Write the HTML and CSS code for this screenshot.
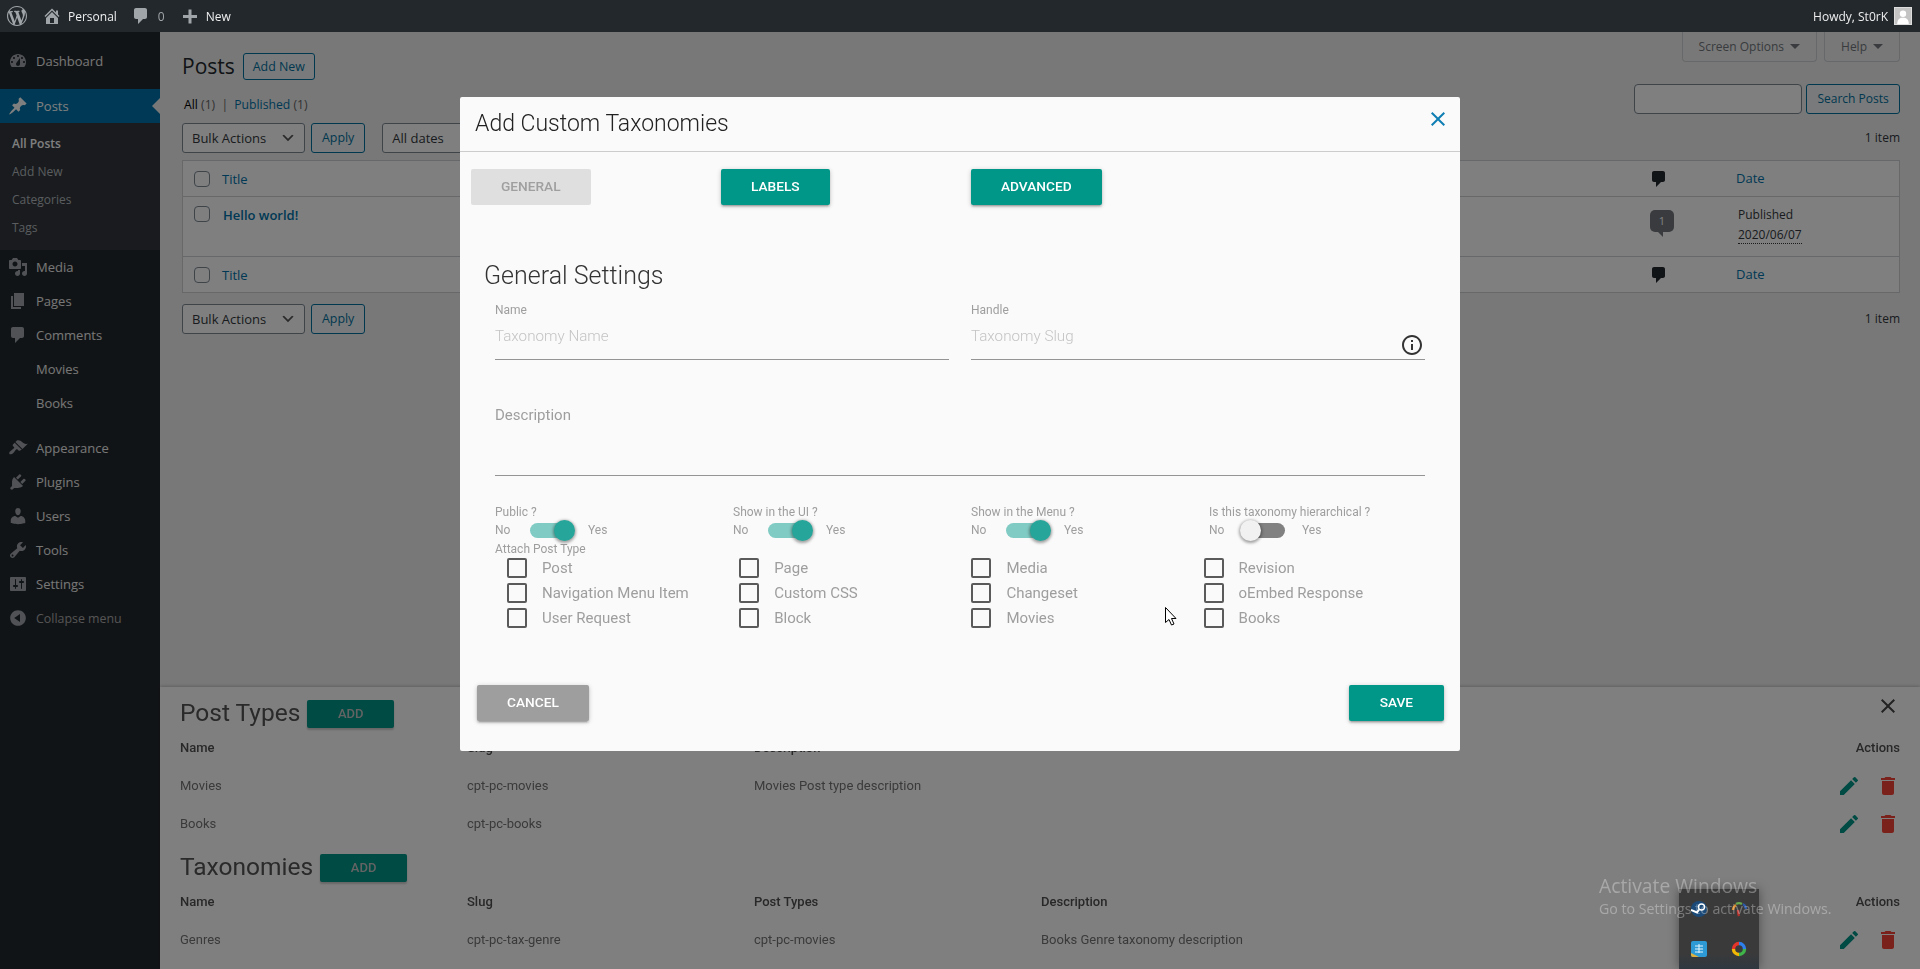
FILE: index.html
```html
<!DOCTYPE html>
<html lang="en">
<head>
    <meta charset="UTF-8">
    <title>Posts</title>
    <link rel="stylesheet" href="styles.css">
</head>
<body>
    <!-- Icon sprite -->
    <svg class="sprite" xmlns="http://www.w3.org/2000/svg">
        <symbol id="i-wp" viewBox="0 0 20 20"><path d="M20 10c0-5.51-4.49-10-10-10C4.48 0 0 4.49 0 10c0 5.52 4.48 10 10 10 5.51 0 10-4.48 10-10zM7.78 15.37L4.37 6.22c.55-.02 1.17-.08 1.17-.08.5-.06.44-1.13-.06-1.11 0 0-1.45.11-2.37.11-.18 0-.37 0-.58-.01C4.12 2.69 6.87 1.11 10 1.11c2.33 0 4.45.87 6.05 2.34-.68-.11-1.65.39-1.65 1.58 0 .74.45 1.36.9 2.1.35.61.55 1.36.55 2.46 0 1.49-1.4 5-1.4 5l-3.03-8.37c.54-.02.82-.17.82-.17.5-.05.44-1.25-.06-1.22 0 0-1.44.12-2.38.12-.87 0-2.33-.12-2.33-.12-.5-.03-.56 1.2-.06 1.22l.92.08 1.26 3.41zM17.41 10c.24-.64.74-1.87.43-4.25.7 1.29 1.05 2.71 1.05 4.25 0 3.29-1.73 6.24-4.4 7.78.97-2.59 1.94-5.2 2.92-7.78zM6.1 18.09C3.12 16.65 1.11 13.53 1.11 10c0-1.3.23-2.48.72-3.59C3.25 10.3 4.67 14.2 6.1 18.09zm4.03-6.63l2.58 6.98c-.86.29-1.76.45-2.71.45-.79 0-1.57-.11-2.29-.33.81-2.38 1.62-4.74 2.42-7.1z"/></symbol>
        <symbol id="i-home" viewBox="0 0 20 20"><path d="M16 8.5l1.53 1.53-1.06 1.06L10 4.62l-6.47 6.47-1.06-1.06L10 2.5l4 4v-2h2v4zm-6-2.46l6 5.99V18H4v-5.97zM12 17v-5H8v5h4z"/></symbol>
        <symbol id="i-comment" viewBox="0 0 20 20"><path d="M5 2h9c1.1 0 2 .9 2 2v7c0 1.1-.9 2-2 2h-2l-5 5v-5H5c-1.1 0-2-.9-2-2V4c0-1.1.9-2 2-2z"/></symbol>
        <symbol id="i-plus" viewBox="0 0 20 20"><path d="M17 9v3h-5.5v5.5h-3V12H3V9h5.5V3.5h3V9H17z"/></symbol>
        <symbol id="i-dashboard" viewBox="0 0 20 20"><path fill-rule="evenodd" d="M3.76 16h12.48c1.1-1.37 1.76-3.11 1.76-5 0-4.42-3.58-8-8-8s-8 3.58-8 8c0 1.89.66 3.63 1.76 5zM10 4c.55 0 1 .45 1 1s-.45 1-1 1-1-.45-1-1 .45-1 1-1zM6 6c.55 0 1 .45 1 1s-.45 1-1 1-1-.45-1-1 .45-1 1-1zm8 0c.55 0 1 .45 1 1s-.45 1-1 1-1-.45-1-1 .45-1 1-1zm-5.37 5.55L12 7v6c0 1.1-.9 2-2 2s-2-.9-2-2c0-.57.24-1.08.63-1.45zM4 10c.55 0 1 .45 1 1s-.45 1-1 1-1-.45-1-1 .45-1 1-1zm12 0c.55 0 1 .45 1 1s-.45 1-1 1-1-.45-1-1 .45-1 1-1z"/></symbol>
        <symbol id="i-pin" viewBox="0 0 20 20"><path d="M10.44 3.02l1.82-1.82 6.36 6.35-1.83 1.82c-1.05-.68-2.48-.57-3.41.36l-.75.75c-.92.93-1.04 2.35-.35 3.41l-1.83 1.82-2.41-2.41-2.8 2.79c-.42.42-3.38 2.71-3.8 2.29s1.86-3.39 2.28-3.81l2.79-2.79L4.1 9.36l1.83-1.82c1.05.69 2.48.57 3.4-.36l.75-.75c.93-.92 1.05-2.35.36-3.41z"/></symbol>
        <symbol id="i-media" viewBox="0 0 20 20"><path fill-rule="evenodd" d="M13 11V4c0-.55-.45-1-1-1h-1.67L9 1H5L3.67 3H2c-.55 0-1 .45-1 1v7c0 .55.45 1 1 1h10c.55 0 1-.45 1-1zM7 4.5c1.38 0 2.5 1.12 2.5 2.5S8.38 9.5 7 9.5 4.5 8.38 4.5 7 5.62 4.5 7 4.5zM14 6h5v10.5c0 1.38-1.12 2.5-2.5 2.5S14 17.88 14 16.5s1.12-2.5 2.5-2.5c.17 0 .34.02.5.05V9h-3V6zm-4 8.05V13h2v3.5c0 1.38-1.12 2.5-2.5 2.5S7 17.88 7 16.5 8.12 14 9.5 14c.17 0 .34.02.5.05z"/></symbol>
        <symbol id="i-pages" viewBox="0 0 20 20"><path d="M6 15V2h10v13H6zm-1 1h8v2H3V5h2v11z"/></symbol>
        <symbol id="i-appearance" viewBox="0 0 20 20"><path d="M14.48 11.06L7.41 3.99l1.5-1.5c.5-.56 2.3-.47 3.51.32 1.21.8 1.43 1.28 2.91 2.1 1.18.64 2.45 1.26 4.45.85zm-.71.71L6.7 4.7 4.93 6.47c-.39.39-.39 1.02 0 1.41l1.06 1.06c.39.39.39 1.03 0 1.42-.6.6-1.43 1.11-2.21 1.69-.35.26-.7.53-1.01.84C1.43 13.23.75 15.2 1.5 15.95s2.72.07 4.06-1.27c.31-.31.58-.66.84-1.01.58-.78 1.09-1.61 1.69-2.21.39-.39 1.02-.39 1.41 0l1.06 1.06c.39.39 1.02.39 1.41 0z"/></symbol>
        <symbol id="i-plugins" viewBox="0 0 20 20"><path d="M13.11 4.36L9.87 7.6 8 5.73l3.24-3.24c.35-.34 1.05-.2 1.56.32.52.51.66 1.21.31 1.55zm-8 1.77l.91-1.12 9.01 9.01-1.19.84c-.71.71-2.63 1.16-3.82 1.16H6.14L4.9 17.26c-.59.59-1.54.59-2.12 0-.59-.58-.59-1.53 0-2.12l1.24-1.24v-3.88c0-1.13.4-3.19 1.09-3.89zm7.26 3.97l3.24-3.24c.34-.35 1.04-.21 1.55.31.52.51.66 1.21.31 1.55l-3.24 3.25z"/></symbol>
        <symbol id="i-users" viewBox="0 0 20 20"><path d="M10 9.25c-2.27 0-2.73-3.44-2.73-3.44C7 4.02 7.82 2 9.97 2c2.16 0 2.98 2.02 2.71 3.81 0 0-.41 3.44-2.68 3.44zm0 2.57L12.72 10c2.39 0 4.52 2.33 4.52 4.53v2.49s-3.65 1.13-7.24 1.13c-3.65 0-7.24-1.13-7.24-1.13v-2.49c0-2.25 1.94-4.48 4.47-4.48z"/></symbol>
        <symbol id="i-tools" viewBox="0 0 20 20"><path fill-rule="evenodd" d="M16.68 9.77c-1.34 1.34-3.3 1.67-4.95.99l-5.41 6.52c-.99.99-2.59.99-3.58 0s-.99-2.59 0-3.57l6.52-5.42c-.68-1.65-.35-3.61.99-4.95 1.28-1.28 3.12-1.62 4.72-1.06l-2.89 2.89 2.82 2.82 2.86-2.87c.53 1.58.18 3.39-1.08 4.65zM3.81 16.21c.4.39 1.04.39 1.43 0 .4-.4.4-1.04 0-1.43-.39-.4-1.03-.4-1.43 0-.39.39-.39 1.03 0 1.43z"/></symbol>
        <symbol id="i-settings" viewBox="0 0 20 20"><path fill-rule="evenodd" d="M18 16V4c0-.55-.45-1-1-1H3c-.55 0-1 .45-1 1v12c0 .55.45 1 1 1h14c.55 0 1-.45 1-1zM8 11h1c.55 0 1 .45 1 1s-.45 1-1 1H8v1.5c0 .28-.22.5-.5.5s-.5-.22-.5-.5V13H6c-.55 0-1-.45-1-1s.45-1 1-1h1V5.5c0-.28.22-.5.5-.5s.5.22.5.5V11zm5-2h-1c-.55 0-1-.45-1-1s.45-1 1-1h1V5.5c0-.28.22-.5.5-.5s.5.22.5.5V7h1c.55 0 1 .45 1 1s-.45 1-1 1h-1v5.5c0 .28-.22.5-.5.5s-.5-.22-.5-.5V9z"/></symbol>
        <symbol id="i-collapse" viewBox="0 0 20 20"><path fill-rule="evenodd" d="M10 2.16c4.33 0 7.84 3.51 7.84 7.84s-3.51 7.84-7.84 7.84S2.16 14.33 2.16 10 5.71 2.16 10 2.16zm2 11.72V6.12L6.18 9.97z"/></symbol>
        <symbol id="i-close" viewBox="0 0 24 24"><path d="M19 6.41L17.59 5 12 10.59 6.41 5 5 6.41 10.59 12 5 17.59 6.41 19 12 13.41 17.59 19 19 17.59 13.41 12z"/></symbol>
        <symbol id="i-info" viewBox="0 0 24 24"><path d="M11 7h2v2h-2zm0 4h2v6h-2zm1-9C6.48 2 2 6.48 2 12s4.48 10 10 10 10-4.48 10-10S17.52 2 12 2zm0 18c-4.41 0-8-3.59-8-8s3.59-8 8-8 8 3.59 8 8-3.59 8-8 8z"/></symbol>
        <symbol id="i-edit" viewBox="0 0 24 24"><path d="M3 17.25V21h3.75L17.81 9.94l-3.75-3.75L3 17.25zM20.71 7.04a1 1 0 0 0 0-1.41l-2.34-2.34a1 1 0 0 0-1.41 0l-1.83 1.83 3.75 3.75 1.83-1.83z"/></symbol>
        <symbol id="i-trash" viewBox="0 0 24 24"><path d="M6 19c0 1.1.9 2 2 2h8c1.1 0 2-.9 2-2V7H6v12zM19 4h-3.5l-1-1h-5l-1 1H5v2h14V4z"/></symbol>
        <symbol id="i-chevron" viewBox="0 0 20 20"><path d="M5 6l5 5 5-5 2 1-7 7-7-7z"/></symbol>
    </svg>

    <!-- Admin bar -->
    <header class="adminbar">
        <svg class="bar-icon bar-logo"><use href="#i-wp"/></svg>
        <svg class="bar-icon bar-home"><use href="#i-home"/></svg>
        <span class="bar-site">Personal</span>
        <svg class="bar-icon bar-comment"><use href="#i-comment"/></svg>
        <span class="bar-count">0</span>
        <svg class="bar-icon bar-plus"><use href="#i-plus"/></svg>
        <span class="bar-new">New</span>
        <span class="bar-howdy">Howdy, St0rK</span>
        <span class="avatar">
            <svg viewBox="0 0 18 18"><circle cx="9" cy="6.5" r="3.6"/><path d="M2.5 18c0-5 2.5-7 6.5-7s6.500 2 6.500 7z"/></svg>
        </span>
    </header>

    <div class="wrap">
        <!-- Sidebar -->
        <nav class="sidebar">
            <a class="menu-item"><svg class="menu-icon"><use href="#i-dashboard"/></svg>Dashboard</a>
            <a class="menu-item current sep"><svg class="menu-icon"><use href="#i-pin"/></svg>Posts</a>
            <div class="submenu">
                <a class="active">All Posts</a>
                <a>Add New</a>
                <a>Categories</a>
                <a>Tags</a>
            </div>
            <a class="menu-item"><svg class="menu-icon"><use href="#i-media"/></svg>Media</a>
            <a class="menu-item"><svg class="menu-icon"><use href="#i-pages"/></svg>Pages</a>
            <a class="menu-item"><svg class="menu-icon"><use href="#i-comment"/></svg>Comments</a>
            <a class="menu-item"><span class="menu-icon"></span>Movies</a>
            <a class="menu-item"><span class="menu-icon"></span>Books</a>
            <a class="menu-item sep"><svg class="menu-icon"><use href="#i-appearance"/></svg>Appearance</a>
            <a class="menu-item"><svg class="menu-icon"><use href="#i-plugins"/></svg>Plugins</a>
            <a class="menu-item"><svg class="menu-icon"><use href="#i-users"/></svg>Users</a>
            <a class="menu-item"><svg class="menu-icon"><use href="#i-tools"/></svg>Tools</a>
            <a class="menu-item"><svg class="menu-icon"><use href="#i-settings"/></svg>Settings</a>
            <a class="menu-item collapse"><svg class="menu-icon"><use href="#i-collapse"/></svg>Collapse menu</a>
        </nav>

        <!-- Posts list -->
        <main class="content">
            <div class="screen-links">
                <span class="screen-tab">Screen Options<i class="caret"></i></span>
                <span class="screen-tab">Help<i class="caret"></i></span>
            </div>
            <div class="page-head">
                <h1>Posts</h1>
                <a class="btn-outline add-new">Add New</a>
            </div>
            <div class="filter-row">
                <div class="subsub"><b>All</b> <span>(1)</span> <em>|</em> <a>Published</a> <span>(1)</span></div>
                <div class="search-box">
                    <span class="search-input"></span>
                    <a class="btn-outline search-btn">Search Posts</a>
                </div>
            </div>
            <div class="tablenav top">
                <div class="select bulk">Bulk Actions<svg><use href="#i-chevron"/></svg></div>
                <a class="btn-outline">Apply</a>
                <div class="select dates">All dates<svg><use href="#i-chevron"/></svg></div>
                <span class="items">1 item</span>
            </div>
            <table class="posts">
                <tr class="head">
                    <td class="cb"><i class="wp-check"></i></td>
                    <td class="title"><a>Title</a></td>
                    <td class="com"><svg class="com-icon"><use href="#i-comment"/></svg></td>
                    <td class="date"><a>Date</a></td>
                </tr>
                <tr class="post">
                    <td class="cb"><i class="wp-check"></i></td>
                    <td class="title"><a class="post-title">Hello world!</a></td>
                    <td class="com"><span class="bubble">1</span></td>
                    <td class="date">Published<br><span class="stamp">2020/06/07</span></td>
                </tr>
                <tr class="head foot">
                    <td class="cb"><i class="wp-check"></i></td>
                    <td class="title"><a>Title</a></td>
                    <td class="com"><svg class="com-icon"><use href="#i-comment"/></svg></td>
                    <td class="date"><a>Date</a></td>
                </tr>
            </table>
            <div class="tablenav bottom">
                <div class="select bulk">Bulk Actions<svg><use href="#i-chevron"/></svg></div>
                <a class="btn-outline">Apply</a>
                <span class="items">1 item</span>
            </div>
        </main>
    </div>

    <!-- Bottom sheet with the plugin's lists -->
    <section class="sheet">
        <svg class="sheet-close"><use href="#i-close"/></svg>
        <div class="sheet-title">
            <h2>Post Types</h2>
            <a class="btn-add">ADD</a>
        </div>
        <div class="row row-head"><span>Name</span><span>Slug</span><span>Description</span><span></span><span>Actions</span></div>
        <div class="row">
            <span>Movies</span><span>cpt-pc-movies</span><span>Movies Post type description</span><span></span>
            <span class="actions"><svg class="ic-edit"><use href="#i-edit"/></svg><svg class="ic-trash"><use href="#i-trash"/></svg></span>
        </div>
        <div class="row">
            <span>Books</span><span>cpt-pc-books</span><span></span><span></span>
            <span class="actions"><svg class="ic-edit"><use href="#i-edit"/></svg><svg class="ic-trash"><use href="#i-trash"/></svg></span>
        </div>
        <div class="sheet-title second">
            <h2>Taxonomies</h2>
            <a class="btn-add">ADD</a>
        </div>
        <div class="row row-head"><span>Name</span><span>Slug</span><span>Post Types</span><span>Description</span><span>Actions</span></div>
        <div class="row">
            <span>Genres</span><span>cpt-pc-tax-genre</span><span>cpt-pc-movies</span><span>Books Genre taxonomy description</span>
            <span class="actions"><svg class="ic-edit"><use href="#i-edit"/></svg><svg class="ic-trash"><use href="#i-trash"/></svg></span>
        </div>
    </section>

    <div class="overlay"></div>

    <!-- Modal -->
    <div class="modal">
        <div class="modal-head">
            <h3>Add Custom Taxonomies</h3>
            <svg class="modal-close"><use href="#i-close"/></svg>
        </div>
        <div class="tabs">
            <div><a class="btn disabled">General</a></div>
            <div><a class="btn">Labels</a></div>
            <div><a class="btn">Advanced</a></div>
        </div>
        <h4>General Settings</h4>
        <div class="form">
            <div class="fields">
                <label class="field">
                    <span class="small-label">Name</span>
                    <input type="text" placeholder="Taxonomy Name">
                </label>
                <label class="field">
                    <span class="small-label">Handle</span>
                    <input type="text" placeholder="Taxonomy Slug">
                    <svg class="info"><use href="#i-info"/></svg>
                </label>
            </div>
            <textarea placeholder="Description"></textarea>
            <div class="switches">
                <div>
                    <span class="small-label">Public ?</span>
                    <div class="switch-row"><span class="no">No</span><i class="switch on"></i><span>Yes</span></div>
                </div>
                <div>
                    <span class="small-label">Show in the UI ?</span>
                    <div class="switch-row"><span class="no">No</span><i class="switch on"></i><span>Yes</span></div>
                </div>
                <div>
                    <span class="small-label">Show in the Menu ?</span>
                    <div class="switch-row"><span class="no">No</span><i class="switch on"></i><span>Yes</span></div>
                </div>
                <div>
                    <span class="small-label">Is this taxonomy hierarchical ?</span>
                    <div class="switch-row"><span class="no">No</span><i class="switch off"></i><span>Yes</span></div>
                </div>
            </div>
            <span class="small-label attach">Attach Post Type</span>
            <div class="checks">
                <label class="check"><i></i>Post</label>
                <label class="check"><i></i>Page</label>
                <label class="check"><i></i>Media</label>
                <label class="check"><i></i>Revision</label>
                <label class="check"><i></i>Navigation Menu Item</label>
                <label class="check"><i></i>Custom CSS</label>
                <label class="check"><i></i>Changeset</label>
                <label class="check"><i></i>oEmbed Response</label>
                <label class="check"><i></i>User Request</label>
                <label class="check"><i></i>Block</label>
                <label class="check"><i></i>Movies</label>
                <label class="check"><i></i>Books</label>
            </div>
        </div>
        <div class="modal-foot">
            <a class="btn cancel">Cancel</a>
            <a class="btn save">Save</a>
        </div>
    </div>

    <!-- Desktop stuff on top of the browser -->
    <div class="tray">
        <svg viewBox="0 0 16 16"><circle cx="8" cy="8" r="8" fill="#1b4a78"/><circle cx="10.5" cy="6" r="3" fill="none" stroke="#fff" stroke-width="1.4"/><path d="M0 9l6 2.500 2-3" fill="none" stroke="#fff" stroke-width="2"/></svg>
        <svg viewBox="0 0 16 16" fill="none" stroke-width="2.400"><path d="M2 9a6 6 0 0 1 3-5" stroke="#d98a2b"/><path d="M5 3a6 6 0 0 1 6 0" stroke="#6aa84f"/><path d="M12 3a6 6 0 0 1 3 5" stroke="#2d5aa8"/><path d="M7 9c0 3 0 4 1 6" stroke="#b3322c"/></svg>
        <svg viewBox="0 0 16 16"><rect width="16" height="16" rx="2" fill="#2d9ad6"/><path d="M0 12l8 4H2a2 2 0 0 1-2-2z" fill="#e0b03a"/><path d="M4 5h8M4 8h8M4 11h8M8 3v9" stroke="#e6f4fb" fill="none"/></svg>
        <svg viewBox="0 0 16 16" fill="none" stroke-width="3.400"><path d="M8 2.500a5.500 5.500 0 0 1 5.500 5.500" stroke="#2f80ed"/><path d="M13.500 8A5.500 5.500 0 0 1 8 13.500" stroke="#3fb54a"/><path d="M8 13.500A5.500 5.500 0 0 1 2.500 8" stroke="#f2b705"/><path d="M2.500 8A5.500 5.500 0 0 1 8 2.500" stroke="#e5352b"/></svg>
    </div>
    <div class="activate">
        <p class="activate-big">Activate Windows</p>
        <p>Go to Settings to activate Windows.</p>
    </div>
    <svg class="cursor" viewBox="0 0 12 19"><path d="M.5.500v15l3.500-3 2.500 5.500 2.500-1-2.500-5.500H11z"/></svg>
</body>
</html>
```

FILE: styles.css
```css
* { margin: 0; padding: 0; box-sizing: border-box; }
html, body { height: 100%; overflow: hidden; }
body {
    background: #f1f1f1;
    color: #32373c;
    font-family: "Open Sans", sans-serif;
    font-size: 12px;
}
a { text-decoration: none; }
.sprite { display: none; }

/* Admin bar */
.adminbar {
    position: fixed;
    top: 0;
    left: 0;
    right: 0;
    height: 32px;
    z-index: 200;
    background: #23282d;
    color: #eee;
    display: flex;
    align-items: center;
    padding: 0 8px 0 7px;
    font-size: 12px;
}
.bar-icon { width: 20px; height: 20px; fill: #a0a5aa; flex: none; }
.bar-home { margin-left: 15px; }
.bar-site { margin-left: 6px; }
.bar-comment { margin-left: 14px; }
.bar-count { margin-left: 7px; color: #a0a5aa; }
.bar-plus { margin-left: 15px; }
.bar-new { margin-left: 6px; }
.bar-howdy { margin-left: auto; }
.avatar { width: 18px; height: 18px; margin-left: 6px; background: #c4c4c4; border: 1px solid #ddd; overflow: hidden; }
.avatar svg { display: block; width: 16px; height: 16px; fill: #fff; }

/* Sidebar */
.wrap { display: flex; height: 100%; padding-top: 32px; }
.sidebar { width: 160px; flex: none; background: #23282d; padding-top: 12px; }
.menu-item {
    position: relative;
    display: flex;
    align-items: center;
    height: 34px;
    color: #eee;
    font-size: 13px;
}
.menu-icon { width: 20px; height: 20px; margin: 0 8px; flex: none; fill: #a0a5aa; }
.sep { margin-top: 11px; }
.current { background: #0073aa; color: #fff; }
.current .menu-icon { fill: #fff; }
.current::after {
    content: "";
    position: absolute;
    right: 0;
    top: 9px;
    border: 8px solid transparent;
    border-left-width: 0;
    border-right-color: #f1f1f1;
}
.submenu { background: #32373c; padding: 7px 0 8px; }
.submenu a { display: block; height: 28px; line-height: 28px; padding-left: 12px; font-size: 12px; color: #b4b9be; }
.submenu .active { color: #fff; font-weight: 600; }
.collapse { color: #aaa; font-size: 12.4px; }

/* Posts list */
.content { flex: 1; min-width: 0; padding: 0 20px 0 22px; }
.screen-links { float: right; display: flex; gap: 7px; }
.screen-tab {
    height: 30px;
    line-height: 30px;
    padding: 0 16px;
    background: #f1f1f1;
    color: #72777c;
    border: 1px solid #ccd0d4;
    border-top: none;
    border-radius: 0 0 4px 4px;
}
.caret {
    display: inline-block;
    margin-left: 6px;
    vertical-align: 2px;
    border: 5px solid transparent;
    border-top-color: #72777c;
    border-bottom-width: 0;
}
.page-head { display: flex; align-items: center; gap: 8px; padding-top: 21px; }
.page-head h1 { font-size: 21px; font-weight: 400; color: #23282d; line-height: 27px; }
.btn-outline {
    display: inline-block;
    height: 30px;
    line-height: 28px;
    padding: 0 10px;
    font-size: 12.4px;
    color: #0071a1;
    background: #f3f5f6;
    border: 1px solid #0071a1;
    border-radius: 3px;
}
.add-new { height: 27px; line-height: 25px; padding: 0 9px; }
.search-btn { padding: 0 10.300px; font-size: 12px; }
.filter-row { display: flex; justify-content: space-between; align-items: flex-end; margin-top: 4px; height: 30px; }
.subsub { color: #666; padding: 0 0 0 2px; font-size: 12.2px; line-height: 19px; }
.subsub b { color: #000; font-weight: 400; }
.subsub a { color: #0073aa; }
.subsub em { font-style: normal; margin: 0 3px; }
.search-box { display: flex; gap: 4px; }
.search-input { width: 168px; height: 30px; background: #fff; border: 1px solid #7e8993; border-radius: 4px; }
.tablenav { display: flex; align-items: center; gap: 6px; height: 30px; margin-top: 9px; }
.tablenav.bottom { margin-top: 11px; }
.items { margin: -2px 0 0 auto; color: #32373c; }
.select {
    display: flex;
    align-items: center;
    justify-content: space-between;
    height: 30px;
    padding: 0 8px 0 9px;
    background: #fff;
    border: 1px solid #7e8993;
    border-radius: 3px;
    font-size: 13px;
}
.select svg { width: 16px; height: 16px; fill: #555; }
.bulk { width: 123px; }
.dates { width: 120px; margin-left: 11px; }
.posts { width: 100%; margin-top: 7px; background: #fff; border: 1px solid #ccd0d4; border-spacing: 0; }
.posts td { vertical-align: middle; border-bottom: 1px solid #ccd0d4; }
.posts a { color: #0073aa; font-size: 13px; }
.head td { height: 36px; }
.post td { height: 60px; vertical-align: top; padding-top: 9px; }
.posts .foot td { border-bottom: none; height: 35px; }
.cb { width: 39px; padding-left: 11px; }
.wp-check { display: block; width: 16px; height: 16px; background: #fff; border: 1px solid #7e8993; border-radius: 4px; }
.posts .post-title { display: block; margin-left: 1px; font-weight: 600; line-height: 18px; color: #0073aa; }
.com { width: 88px; padding-left: 12px; }
.com-icon { display: block; width: 20px; height: 20px; fill: #23282d; }
.post .com { padding-left: 13px; }
.bubble {
    position: relative;
    display: block;
    width: 24px;
    height: 22px;
    margin-top: 4px;
    line-height: 22px;
    text-align: center;
    font-size: 11px;
    color: #fff;
    background: #72777c;
    border-radius: 5px;
}
.bubble::after {
    content: "";
    position: absolute;
    left: 8px;
    top: 22px;
    border-top: 5px solid #72777c;
    border-left: 5px solid transparent;
}
.date { width: 174px; padding-left: 11px; line-height: 20px; }
.post .date { padding-left: 13px; padding-top: 8px; }
.stamp { border-bottom: 1px dotted #32373c; }

/* Bottom sheet */
.sheet {
    position: fixed;
    left: 160px;
    right: 0;
    bottom: 0;
    height: 282px;
    padding: 10px 20px 0;
    overflow: hidden;
    background: #fff;
    font-family: Roboto, sans-serif;
    font-size: 13px;
    color: #757575;
    box-shadow: 0 -1px 3px rgba(0,0,0,0.2);
}
.sheet-close { position: absolute; right: 20px; top: 7px; width: 24px; height: 24px; fill: #444; }
.sheet-title { display: flex; align-items: flex-end; gap: 7px; height: 32px; }
.sheet-title.second { margin-top: 8px; }
.sheet-title h2 { font-size: 24.5px; font-weight: 400; line-height: 32px; color: #555; }
.btn-add {
    width: 87px;
    height: 28px;
    margin-bottom: 1px;
    line-height: 28px;
    text-align: center;
    font-size: 13px;
    font-weight: 500;
    color: #c6c6c6;
    background: #009688;
    border-radius: 2px;
    box-shadow: 0 2px 2px rgba(0,0,0,0.2);
}
.row { display: grid; grid-template-columns: 287px 287px 287px 1fr auto; align-items: center; height: 38px; padding-bottom: 2px; }
.row-head { color: #505050; font-weight: 500; }
.actions { display: flex; gap: 15px; margin-top: 2px; }
.actions svg { width: 24px; height: 24px; }
.ic-edit { fill: #009688; }
.ic-trash { fill: #f44336; }

.overlay { position: fixed; inset: 0; z-index: 100; background: rgba(0,0,0,0.5); }

/* Modal */
.modal {
    position: fixed;
    top: 97px;
    left: 460px;
    width: 1000px;
    z-index: 150;
    background: #fafafa;
    font-family: Roboto, sans-serif;
    color: #9e9e9e;
    border-radius: 2px;
}
.modal-head {
    display: flex;
    align-items: center;
    justify-content: space-between;
    height: 55px;
    padding: 0 10px 2px 15px;
    border-bottom: 1px solid #ccc;
}
.modal-head h3 { font-size: 23px; font-weight: 300; color: #222; }
.modal-close { width: 24px; height: 24px; fill: #0f7eb3; margin-top: -8px; }
.tabs { display: grid; grid-template-columns: repeat(3, 250px); padding: 17px 0 0 11px; }
.btn {
    display: inline-block;
    height: 36px;
    line-height: 35px;
    padding: 0 30px;
    background: #009688;
    color: #fff;
    font-size: 13.7px;
    font-weight: 500;
    text-transform: uppercase;
    border-radius: 2px;
    box-shadow: 0 2px 2px rgba(0,0,0,0.14), 0 3px 1px -2px rgba(0,0,0,0.12), 0 1px 5px rgba(0,0,0,0.2);
}
.btn.disabled { background: #dfdfdf; color: #9f9f9f; box-shadow: none; }
.modal h4 { margin: 55px 0 0 24px; font-size: 25px; font-weight: 300; line-height: 32px; color: #333; }
.form { padding: 11px 35px 0; }
.small-label { display: block; font-size: 12px; line-height: 14px; color: #9e9e9e; }
.fields { display: grid; grid-template-columns: 454px 454px; gap: 22px; }
.field { position: relative; display: block; }
.field input {
    display: block;
    width: 100%;
    height: 43px;
    padding: 9px 0 14px;
    border: none;
    border-bottom: 1px solid #949494;
    background: none;
    outline: none;
    font: 300 15.2px/19px Roboto, sans-serif;
}
.field input::placeholder { color: #c4c4c4; opacity: 1; }
.info { position: absolute; right: 1px; top: 30px; width: 24px; height: 24px; fill: #333; }
textarea {
    display: block;
    width: 100%;
    height: 71px;
    margin-top: 45px;
    padding: 0;
    border: none;
    border-bottom: 1px solid #949494;
    background: none;
    outline: none;
    resize: none;
    font: 400 15px/20px Roboto, sans-serif;
}
textarea::placeholder { color: #9e9e9e; opacity: 1; }
.switches { display: grid; grid-template-columns: repeat(4, 238px); margin-top: 29px; }
.switch-row { display: flex; align-items: center; height: 22px; font-size: 12px; }
.no { width: 35px; }
.switch { position: relative; width: 43px; height: 15px; margin-right: 15px; background: #818181; border-radius: 8px; }
.switch.off { margin-left: -2px; margin-right: 17px; }
.switch::after {
    content: "";
    position: absolute;
    left: -2px;
    top: -3px;
    width: 21px;
    height: 21px;
    border-radius: 50%;
    background: #f1f1f1;
    box-shadow: 0 1px 3px 1px rgba(0,0,0,0.35);
}
.switch.on { background: #80cbc4; }
.switch.on::after { left: auto; right: -2px; background: #26a69a; }
.attach { margin-top: 1px; }
.checks { display: grid; grid-template-columns: repeat(4, 232.2px); padding-left: 12px; }
.check { display: flex; align-items: center; height: 25px; padding-bottom: 1px; font-size: 15px; font-weight: 400; color: #9e9e9e; }
.check i { display: block; width: 20px; height: 20px; margin-right: 15px; border: 2px solid #5a5a5a; border-radius: 2px; }
.modal-foot { display: flex; justify-content: space-between; margin-top: 54px; padding: 0 16px 30px 17px; }
.modal-foot .cancel { background: #9e9e9e; }
.modal-foot .save { padding: 0 31px; }

/* Desktop */
.tray {
    position: fixed;
    left: 1679px;
    bottom: 0;
    z-index: 300;
    width: 80px;
    height: 80px;
    display: grid;
    grid-template-columns: 1fr 1fr;
    place-items: center;
    background: linear-gradient(#3a3a3a 80%, #303840);
    box-shadow: 0 0 10px rgba(0,0,0,0.4);
}
.tray svg { width: 16px; height: 16px; }
.activate {
    position: fixed;
    left: 1599px;
    top: 872px;
    z-index: 310;
    color: rgba(255,255,255,0.32);
    font-family: "Open Sans", sans-serif;
    font-size: 14.2px;
    line-height: 20px;
}
.activate-big { font-size: 19.3px; line-height: 27px; }
.cursor {
    position: fixed;
    left: 1165px;
    top: 607px;
    z-index: 320;
    width: 12px;
    height: 19px;
    fill: #fff;
    stroke: #000;
    stroke-width: 1;
}
```
